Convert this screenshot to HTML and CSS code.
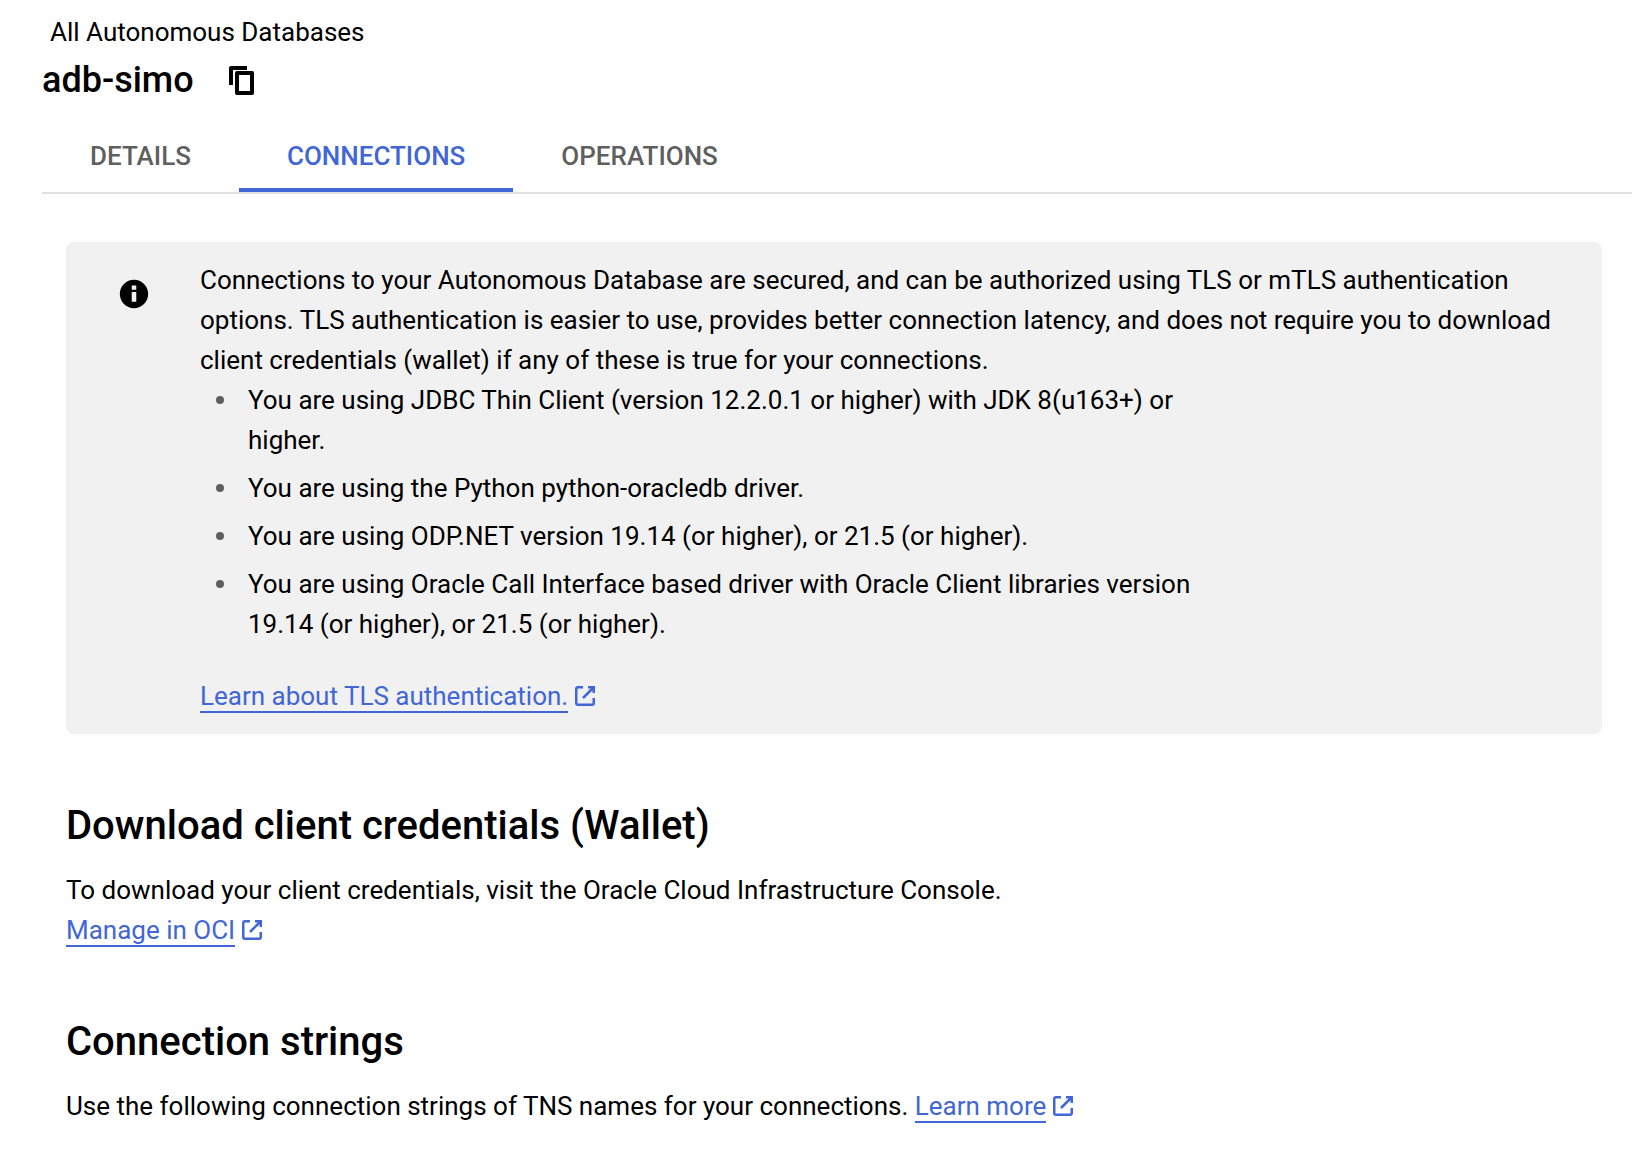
FILE: index.html
```html
<!DOCTYPE html>
<html lang="en">
<head>
  <meta charset="UTF-8">
  <title>adb-simo</title>
  <link rel="stylesheet" href="styles.css">
</head>
<body>
  <header class="page-header">
    <div class="crumb">All Autonomous Databases</div>
    <div class="title-row">
      <h1 class="title">adb-simo</h1>
      <svg class="copy-icon" viewBox="0 0 26 30" fill="currentColor" fill-rule="evenodd">
        <path d="M3 1h16v4H5v15H1V3a2 2 0 0 1 2-2z"></path>
        <path d="M9 6h15a2 2 0 0 1 2 2v20a2 2 0 0 1-2 2H9a2 2 0 0 1-2-2V8a2 2 0 0 1 2-2zm2 4v16h11V10z"></path>
      </svg>
    </div>
    <nav class="tabs">
      <a class="tab">DETAILS</a>
      <a class="tab active">CONNECTIONS</a>
      <a class="tab">OPERATIONS</a>
    </nav>
  </header>

  <main class="content">
    <section class="notice">
      <svg class="info-icon" viewBox="0 0 24 24" fill="currentColor">
        <path d="M12 2C6.480 2 2 6.480 2 12s4.480 10 10 10 10-4.480 10-10S17.520 2 12 2zm1.600 15.500h-3.200v-7h3.200v7zm0-8.500h-3.200V6h3.200v3z"></path>
      </svg>
      <div class="notice-body">
        <p>Connections to your Autonomous Database are secured, and can be authorized using TLS or mTLS authentication options. TLS authentication is easier to use, provides better connection latency, and does not require you to download client credentials (wallet) if any of these is true for your connections.</p>
        <ul class="notice-list">
          <li>You are using JDBC Thin Client (version 12.2.0.1 or higher) with JDK 8(u163+) or higher.</li>
          <li>You are using the Python python-oracledb driver.</li>
          <li>You are using ODP.NET version 19.14 (or higher), or 21.5 (or higher).</li>
          <li>You are using Oracle Call Interface based driver with Oracle Client libraries version 19.14 (or higher), or 21.5 (or higher).</li>
        </ul>
        <p class="notice-link">
          <a class="link">Learn about TLS authentication.</a>
          <svg class="ext-icon" viewBox="0 0 24 24" fill="none" stroke="currentColor" stroke-width="2.500"><path d="M10 3.250H5A1.750 1.750 0 0 0 3.250 5v14A1.750 1.750 0 0 0 5 20.750h14A1.750 1.750 0 0 0 20.750 19v-5"></path><path d="M15 3.250h5.750V9M20.750 3.250 10 14"></path></svg>
        </p>
      </div>
    </section>

    <h2 class="section-title">Download client credentials (Wallet)</h2>
    <p>To download your client credentials, visit the Oracle Cloud Infrastructure Console.</p>
    <p>
      <a class="link">Manage in OCI</a>
      <svg class="ext-icon" viewBox="0 0 24 24" fill="none" stroke="currentColor" stroke-width="2.500"><path d="M10 3.250H5A1.750 1.750 0 0 0 3.250 5v14A1.750 1.750 0 0 0 5 20.750h14A1.750 1.750 0 0 0 20.750 19v-5"></path><path d="M15 3.250h5.750V9M20.750 3.250 10 14"></path></svg>
    </p>

    <h2 class="section-title">Connection strings</h2>
    <p>Use the following connection strings of TNS names for your connections.
      <a class="link">Learn more</a>
      <svg class="ext-icon" viewBox="0 0 24 24" fill="none" stroke="currentColor" stroke-width="2.500"><path d="M10 3.250H5A1.750 1.750 0 0 0 3.250 5v14A1.750 1.750 0 0 0 5 20.750h14A1.750 1.750 0 0 0 20.750 19v-5"></path><path d="M15 3.250h5.750V9M20.750 3.250 10 14"></path></svg>
    </p>
  </main>
</body>
</html>
```
FILE: styles.css
```css
body {
  margin: 0;
  background: #fff;
  color: #000;
  font-family: Roboto, "Liberation Sans", sans-serif;
  font-size: 26px;
  line-height: 40px;
  overflow: hidden;
}

p {
  margin: 0;
}

.page-header {
  padding: 12px 0 0 42px;
}

.crumb {
  padding-left: 8px;
}

.title-row {
  display: flex;
  align-items: center;
  gap: 34px;
  height: 56px;
}

.title {
  margin: 0;
  font-size: 36px;
  font-weight: 500;
  line-height: 56px;
}

.copy-icon {
  width: 26px;
  height: 30px;
}

.tabs {
  display: flex;
  margin-top: 26px;
  border-bottom: 2px solid #e0e0e0;
}

.tab {
  height: 58px;
  padding: 0 48px;
  font-size: 26px;
  font-weight: 500;
  line-height: 44px;
  color: #5f5f5f;
}

.tab.active {
  color: #4166d8;
  border-bottom: 4px solid #4166d8;
  height: 54px;
}

.content {
  padding: 48px 30px 0 66px;
}

.notice {
  display: flex;
  padding: 18px 40px 18px 54px;
  background: #f1f1f1;
  border-radius: 8px;
}

.info-icon {
  flex: none;
  width: 34px;
  height: 34px;
  margin: 17px 49px 0 -3px;
}

.notice-list {
  margin: 0;
  padding: 0 0 0 16px;
  max-width: 992px;
  list-style: none;
}

.notice-list li {
  display: flex;
  gap: 24px;
  margin-bottom: 8px;
}

.notice-list li::before {
  content: "";
  flex: none;
  width: 8px;
  height: 8px;
  margin-top: 16px;
  border-radius: 50%;
  background: #5f5f5f;
}

.notice-link {
  margin-top: 32px;
}

.link {
  color: #4166d8;
  text-decoration: none;
  border-bottom: 2px solid #4166d8;
}

.ext-icon {
  width: 24px;
  height: 24px;
  margin-left: -2px;
  color: #4166d8;
  vertical-align: -3px;
}

.section-title {
  margin: 64px 0 16px;
  font-size: 40px;
  font-weight: 500;
  line-height: 56px;
}
```
